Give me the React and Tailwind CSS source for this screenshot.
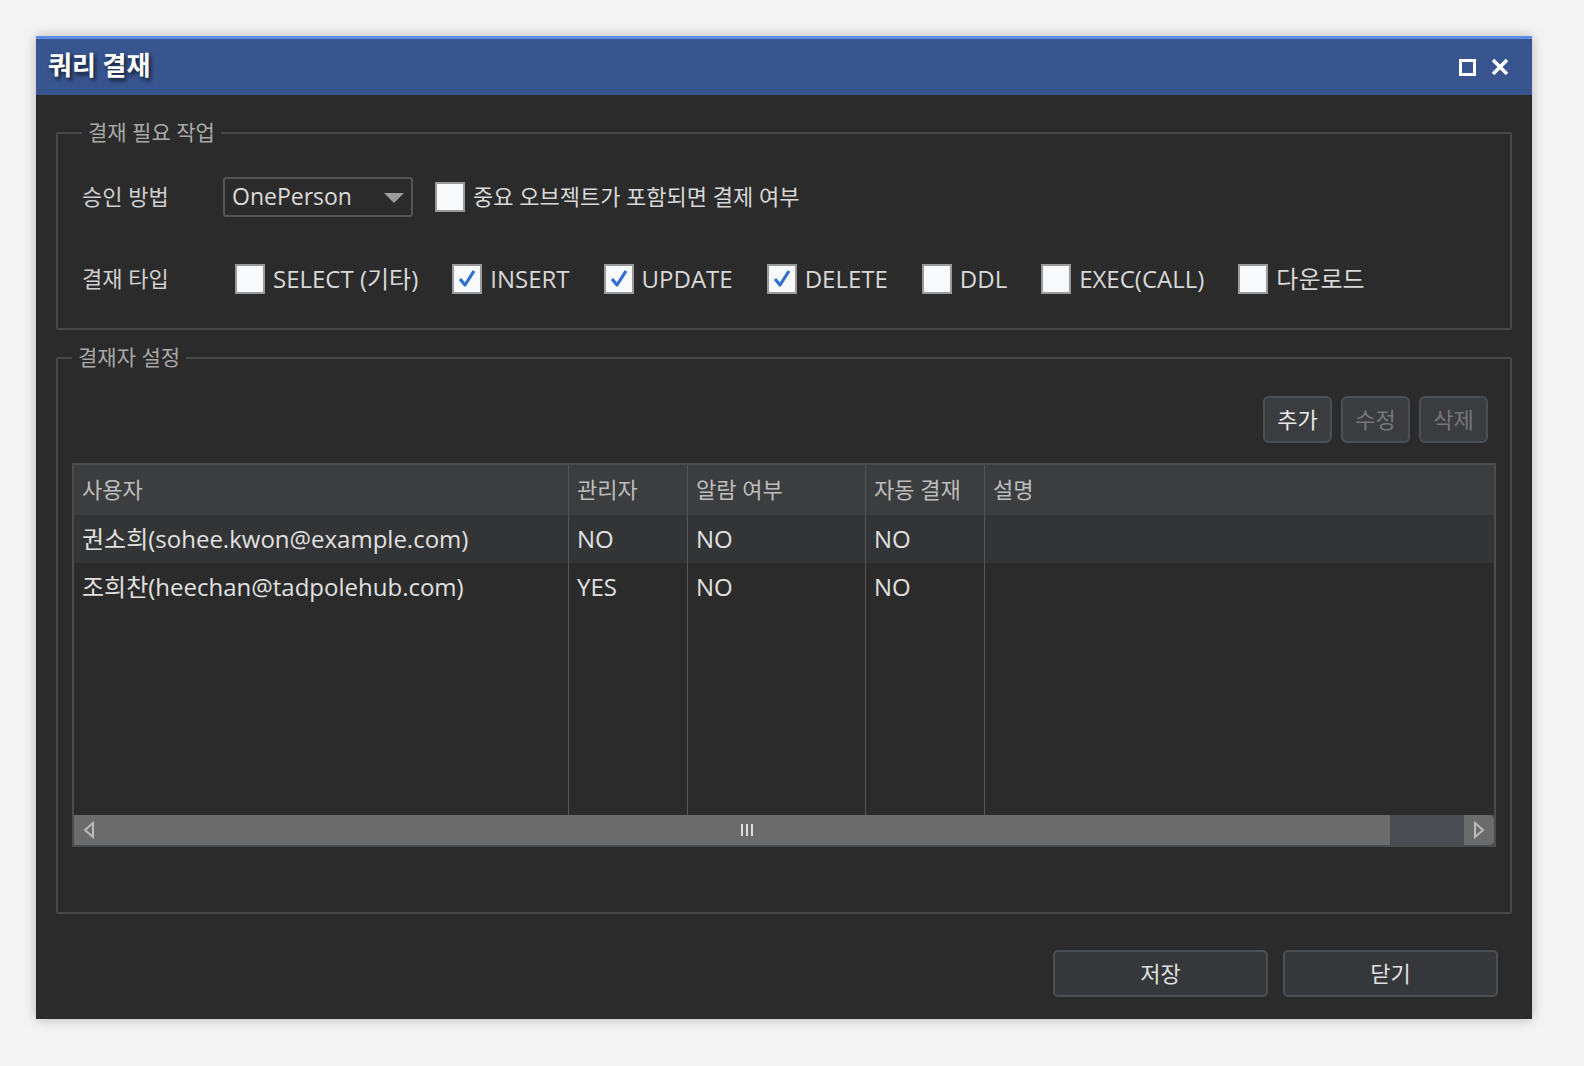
import React from "react";

const F = { fontFamily: '"Open Sans","Noto Sans CJK KR",sans-serif' };

function Box({ checked }) {
  return (
    <span className="w-[30px] h-[30px] bg-[#f8f9fb] border-2 border-[#9a9a9a] flex items-center justify-center shrink-0">
      {checked && (
        <svg width="22" height="22" viewBox="0 0 22 22"><path d="M4 11 L9 17 L18 3" stroke="#2f6fd0" strokeWidth="3.2" fill="none" strokeLinejoin="round" /></svg>
      )}
    </span>
  );
}

function Check({ label, checked }) {
  return (
    <div className="flex items-center gap-[8px] mr-[34px]">
      <Box checked={checked} />
      <span className="text-[24px] text-[#d8d8d8]">{label}</span>
    </div>
  );
}

const cols = [495, 119, 178, 119];
const rows = [
  ["권소희(sohee.kwon@example.com)", "NO", "NO", "NO", ""],
  ["조희찬(heechan@tadpolehub.com)", "YES", "NO", "NO", ""],
  ["", "", "", "", ""], ["", "", "", "", ""], ["", "", "", "", ""], ["", "", "", "", ""],
];

function Row({ cells, bg, h = 48, header }) {
  return (
    <div className={`flex ${bg}`} style={{ height: h }}>
      {cells.map((c, i) => (
        <div key={i} className={`flex items-center px-[8px] whitespace-nowrap ${i < 4 ? "border-r border-[#555]" : "flex-1"} ${header ? "text-[22px] text-[#bdbdbd]" : "text-[24px] text-[#e0e0e0]"}`} style={i < 4 ? { width: cols[i] } : {}}>
          {c}
        </div>
      ))}
    </div>
  );
}

export default function App() {
  return (
    <div className="w-screen h-screen overflow-hidden bg-[#f4f4f4] pt-[36px] pl-[36px]" style={F}>
      <div className="w-[1496px] h-[983px] bg-[#2b2b2b] flex flex-col shadow-[0_0_12px_rgba(0,0,0,0.25)]">
        <div className="h-[59px] bg-[#38558f] border-t-[3px] border-[#5b8de0] flex items-center justify-between px-[12px]">
          <span className="text-[26px] font-bold text-white -mt-[4px] [text-shadow:2px_3px_4px_rgba(0,0,0,0.7)]">쿼리 결재</span>
          <div className="flex items-center gap-[14px] pr-[10px]">
            <span className="w-[17px] h-[17px] border-[3px] border-white"></span>
            <svg width="20" height="20" viewBox="0 0 20 20"><path d="M3 3 L17 17 M17 3 L3 17" stroke="white" strokeWidth="3.5" /></svg>
          </div>
        </div>
        <div className="px-[20px] pt-[22px] flex flex-col">
          <fieldset className="border-2 border-[#484848] rounded-[2px] h-[213px] px-[24px] m-0">
            <legend className="px-[6px] text-[21px] text-[#a8a8a8]">결재 필요 작업</legend>
            <div className="flex items-center h-[40px] mt-[28px]">
              <span className="w-[141px] text-[22px] text-[#cfcfcf]">승인 방법</span>
              <div className="w-[190px] h-[40px] border-2 border-[#555] rounded-[3px] flex items-center justify-between px-[7px]">
                <span className="text-[23px] text-[#dadada]">OnePerson</span>
                <svg width="20" height="12" viewBox="0 0 20 12"><path d="M0 2 L20 2 L10 12 Z" fill="#9c9c9c" /></svg>
              </div>
              <div className="ml-[22px] flex items-center gap-[8px]">
                <Box />
                <span className="text-[22px] text-[#d8d8d8]">중요 오브젝트가 포함되면 결제 여부</span>
              </div>
            </div>
            <div className="flex items-center h-[40px] mt-[42px]">
              <span className="w-[153px] text-[22px] text-[#cfcfcf]">결재 타입</span>
              <Check label="SELECT (기타)" />
              <Check label="INSERT" checked />
              <Check label="UPDATE" checked />
              <Check label="DELETE" checked />
              <Check label="DDL" />
              <Check label="EXEC(CALL)" />
              <Check label="다운로드" />
            </div>
          </fieldset>
          <fieldset className="border-2 border-[#484848] rounded-[2px] h-[572px] px-[14px] m-0 mt-[12px]">
            <legend className="px-[6px] text-[21px] text-[#a8a8a8]">결재자 설정</legend>
            <div className="flex justify-end gap-[9px] mt-[22px] pr-[8px]">
              {[["추가", "text-[#e8e8e8]"], ["수정", "text-[#777]"], ["삭제", "text-[#777]"]].map(([t, c]) => (
                <div key={t} className={`w-[69px] h-[47px] bg-[#3a3c3f] border-2 border-[#4c4f53] rounded-[6px] flex items-center justify-center text-[22px] ${c}`}>{t}</div>
              ))}
            </div>
            <div className="mt-[20px] border-2 border-[#4a4d50] bg-[#2b2b2b]">
              <Row cells={["사용자", "관리자", "알람 여부", "자동 결재", "설명"]} bg="bg-[#3c3d3f]" h={50} header />
              {rows.map((r, i) => (
                <Row key={i} cells={r} bg={i === 0 ? "bg-[#333436]" : ""} h={i >= 2 ? 51 : 48} />
              ))}
              <div className="h-[30px] flex bg-[#4a4e52]">
                <div className="w-[30px] bg-[#6b6b6b] flex items-center justify-center">
                  <svg width="14" height="18" viewBox="0 0 14 18"><path d="M11 2 L3 9 L11 16 Z" fill="none" stroke="#bbb" strokeWidth="2" /></svg>
                </div>
                <div className="w-[1286px] bg-[#6b6b6b] flex items-center justify-center">
                  <svg width="16" height="14" viewBox="0 0 16 14"><path d="M3 1 V13 M8 1 V13 M13 1 V13" stroke="#ddd" strokeWidth="2" /></svg>
                </div>
                <div className="flex-1" />
                <div className="w-[30px] bg-[#6b6b6b] rounded-r-[5px] flex items-center justify-center">
                  <svg width="14" height="18" viewBox="0 0 14 18"><path d="M3 2 L11 9 L3 16 Z" fill="none" stroke="#bbb" strokeWidth="2" /></svg>
                </div>
              </div>
            </div>
          </fieldset>
          <div className="flex justify-end gap-[15px] mt-[36px] pr-[14px]">
            {["저장", "닫기"].map((t) => (
              <div key={t} className="w-[215px] h-[47px] bg-[#35373a] border-2 border-[#4c4f53] rounded-[5px] flex items-center justify-center text-[22px] text-[#e0e0e0]">{t}</div>
            ))}
          </div>
        </div>
      </div>
    </div>
  );
}
